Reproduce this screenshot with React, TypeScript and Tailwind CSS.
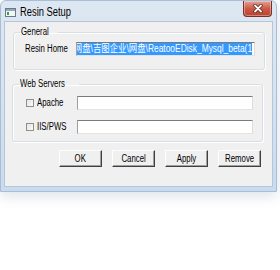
import type { ReactNode } from "react";

const uiFont = "font-['Liberation_Sans','Noto_Sans_CJK_SC',sans-serif]";

const groupClass =
 "m-0 rounded-[3px] border border-[#d5dfe5] px-0 pb-0 shadow-[inset_1px_1px_0_#fff,1px_1px_0_#fff]";
const legendClass = "ml-[6px] px-[1px] text-[10px] leading-[12px] text-[#000]";
const inputClass =
 "h-[14px] border border-t-[#7a7a7a] border-l-[#a0a0a0] border-r-[#dcdcdc] border-b-[#e3e3e3] bg-white";
const buttonClass =
 "flex h-[17px] w-[43px] items-center justify-center border border-t-[#fdfdfd] border-l-[#fdfdfd] border-r-[#404040] border-b-[#404040] bg-[#f0f0f0] text-[10px] leading-none text-[#000] shadow-[inset_-1px_-1px_0_#a0a0a0]";

// the screenshot's text is squeezed sideways, so narrow it the same way
function Narrow({ children, className = "" }: { children: ReactNode; className?: string }) {
 return (
 <span className={`inline-block origin-left scale-x-[0.78] whitespace-nowrap ${className}`}>
 {children}
 </span>
 );
}

function CheckRow({ label }: { label: string }) {
 return (
 <div className="flex items-center">
 <span className="ml-[13px] h-[8px] w-[8px] shrink-0 border border-[#8e8f8f] bg-gradient-to-br from-[#e4e4e4] to-[#fbfbfb]" />
 <div className="ml-[3px] w-[40px] text-[10px] leading-none">
 <Narrow>{label}</Narrow>
 </div>
 <div className={`${inputClass} w-[176px]`} />
 </div>
 );
}

function Button({ children }: { children: ReactNode }) {
 return (
 <button type="button" className={buttonClass}>
 <span className="inline-block scale-x-[0.78] whitespace-nowrap">{children}</span>
 </button>
 );
}

export default function App() {
 return (
 <div className={`h-[270px] w-[280px] overflow-hidden bg-white ${uiFont}`}>
 <div className="w-[277px] rounded-t-[6px] border border-[#a9bed6] bg-gradient-to-b from-[#dde7f2] via-[#d6e3f0] to-[#c9dbee] px-[3px] pb-[4px] shadow-[0_4px_14px_rgba(60,90,130,0.18)]">
 {/* Title bar */}
 <div className="flex h-[20px] items-start">
 <svg width="11" height="9" viewBox="0 0 11 9" className="ml-[1px] mt-[7px]">
 <rect x="0.5" y="0.5" width="10" height="8" fill="#f4f6f4" stroke="#6b7a88" />
 <rect x="1" y="1" width="9" height="2" fill="#8fa6bf" />
 <rect x="2" y="4" width="2" height="3" fill="#3f9a54" />
 </svg>
 <span className="ml-[4px] mt-[4px] text-[12px] leading-[14px] text-[#000]">
 <Narrow>Resin Setup</Narrow>
 </span>
 <div className="ml-auto mr-[1px] flex h-[16px] w-[29px] items-center justify-center rounded-b-[4px] border border-t-0 border-[#7a2f27] bg-gradient-to-b from-[#e2a294] via-[#cc5a48] to-[#b8412f] shadow-[inset_0_0_0_1px_rgba(255,255,255,0.35)]">
 <svg width="10" height="9" viewBox="0 0 10 9">
 <path d="M2 1.5 L8 7.5 M8 1.5 L2 7.5" stroke="#5a1c14" strokeWidth="3.2" strokeLinecap="round" />
 <path d="M2 1.5 L8 7.5 M8 1.5 L2 7.5" stroke="#fff" strokeWidth="1.8" strokeLinecap="round" />
 </svg>
 </div>
 </div>

 {/* Client area */}
 <div className="flex h-[166px] flex-col border border-[#b4c6da] bg-[#f0f0f0] pt-[4px] text-[#000]">
 <fieldset className={`${groupClass} ml-[8px] h-[44px] w-[252px]`}>
 <legend className={legendClass}>
 <Narrow>General</Narrow>
 </legend>
 <div className="mt-[4px] flex items-center">
 <div className="ml-[11px] w-[51px] text-[10px] leading-none">
 <Narrow>Resin Home</Narrow>
 </div>
 <div className={`${inputClass} flex w-[179px] items-center justify-end overflow-hidden pr-[2px]`}>
 <span className="inline-block h-[12px] shrink-0 origin-right scale-x-[0.84] whitespace-nowrap bg-[#3399ff] text-[10px] leading-[12px] text-white">
 网\网盘\吉图企业\网盘\ReatooEDisk_Mysql_beta(1
 </span>
 </div>
 </div>
 </fieldset>

 <fieldset className={`${groupClass} ml-[7px] mt-[8px] h-[64px] w-[251px]`}>
 <legend className={legendClass}>
 <Narrow>Web Servers</Narrow>
 </legend>
 <div className="mt-[6px] flex flex-col gap-[10px]">
 <CheckRow label="Apache" />
 <CheckRow label="IIS/PWS" />
 </div>
 </fieldset>

 <div className="ml-[54px] mt-[8px] flex gap-[10px]">
 <Button>OK</Button>
 <Button>Cancel</Button>
 <Button>Apply</Button>
 <Button>Remove</Button>
 </div>
 </div>
 </div>
 </div>
 );
}
